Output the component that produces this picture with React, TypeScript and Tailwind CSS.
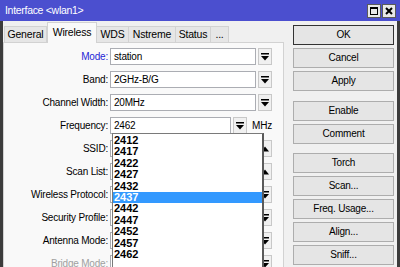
const tabs = [
  { label: "General", w: "w-[43px]" },
  { label: "Wireless", w: "w-[50px]", active: true },
  { label: "WDS", w: "w-[33px]" },
  { label: "Nstreme", w: "w-[48px]" },
  { label: "Status", w: "w-[36px]" },
  { label: "...", w: "w-[19px]" },
];

const freqs = ["2412", "2417", "2422", "2427", "2432", "2437", "2442", "2447", "2452", "2457", "2462"];

const buttonGroups = [
  [{ label: "OK", main: true }, { label: "Cancel" }, { label: "Apply" }],
  [{ label: "Enable" }, { label: "Comment" }],
  [{ label: "Torch" }, { label: "Scan..." }, { label: "Freq. Usage..." }, { label: "Align..." }, { label: "Sniff..." }],
];

function DownIcon() {
  return (
    <svg width="8" height="8" viewBox="0 0 8 8">
      <rect x="0" y="0" width="8" height="1.5" fill="#000" />
      <path d="M0 3 H8 L4 7.5 Z" fill="#000" />
    </svg>
  );
}

function UpIcon() {
  return (
    <svg width="8" height="6" viewBox="0 0 8 6">
      <path d="M0 5.5 H8 L4 0.5 Z" fill="#000" />
    </svg>
  );
}

function DropButton({ up }: { up?: boolean }) {
  return (
    <div className="w-[14px] h-[17px] flex items-center justify-center border border-[#c8c8c8] bg-[#f0f0f0]">
      {up ? <UpIcon /> : <DownIcon />}
    </div>
  );
}

function Field({ value, wide = true }: { value?: string; wide?: boolean }) {
  return (
    <div
      className={`${wide ? "w-[146px]" : "w-[121px]"} h-[17px] border border-[#abadb3] bg-white pl-[3px] flex items-center text-black`}
    >
      {value}
    </div>
  );
}

function Row({
  label,
  children,
  color = "text-black",
}: {
  label: string;
  children: React.ReactNode;
  color?: string;
}) {
  return (
    <div className="flex items-center h-[17px]">
      <div className={`w-[106px] text-right pr-[2px] ${color}`}>{label}</div>
      <div className="flex items-center gap-[2px]">{children}</div>
    </div>
  );
}

export default function App() {
  return (
    <div className="w-[400px] h-[267px] overflow-hidden bg-[#3c3c3c] flex flex-col font-['Liberation_Sans',Arial,sans-serif] text-[10px] tracking-[-0.2px] leading-none">
      <div className="h-[21px] shrink-0 bg-[#4b4fcf] flex items-center pl-[5px] pr-[4px] text-white text-[10.5px] tracking-[-0.3px]">
        <span>Interface &lt;wlan1&gt;</span>
        <div className="ml-auto flex gap-[1px] mt-[1px]">
          <div className="w-[14px] h-[14px] bg-[#e8e8e8] border border-[#5a5a5a] flex items-center justify-center">
            <div className="w-[8px] h-[8px] border border-black border-t-2" />
          </div>
          <div className="w-[14px] h-[14px] bg-[#e8e8e8] border border-[#5a5a5a] flex items-center justify-center">
            <svg width="8" height="8" viewBox="0 0 8 8">
              <path d="M1 1 L7 7 M7 1 L1 7" stroke="#000" strokeWidth="2" />
            </svg>
          </div>
        </div>
      </div>

      <div className="flex-1 mx-[3px] mb-[4px] bg-[#f0f0f0] flex relative">
        <div className="w-[281px] flex flex-col">
          <div className="h-[21px] flex items-end pl-[1px] shrink-0">
            {tabs.map((t) => (
              <div
                key={t.label}
                className={`${t.w} flex items-center justify-center border border-[#d2d2d2] text-black text-[10.5px] ${
                  t.active
                    ? "h-[21px] bg-[#f9f9f9] border-b-0 relative z-10 mb-[-1px] pb-[2px]"
                    : "h-[16px] bg-[#e6e6e6] border-b-0 -ml-[1px] first:ml-0"
                }`}
              >
                {t.label}
              </div>
            ))}
          </div>
          <div className="flex-1 border border-[#d2d2d2] border-b-0 bg-[#f9f9f9] pt-[5px] flex flex-col gap-[6px]">
            <Row label="Mode:" color="text-[#1f1fd6]">
              <Field value="station" />
              <DropButton />
            </Row>
            <Row label="Band:">
              <Field value="2GHz-B/G" />
              <DropButton />
            </Row>
            <Row label="Channel Width:">
              <Field value="20MHz" />
              <DropButton />
            </Row>
            <Row label="Frequency:">
              <Field value="2462" wide={false} />
              <DropButton />
              <span className="ml-[3px] text-black">MHz</span>
            </Row>
            <Row label="SSID:">
              <Field />
              <DropButton up />
            </Row>
            <Row label="Scan List:">
              <Field />
              <DropButton up />
            </Row>
            <Row label="Wireless Protocol:">
              <Field />
              <DropButton />
            </Row>
            <Row label="Security Profile:">
              <Field />
              <DropButton />
            </Row>
            <Row label="Antenna Mode:">
              <Field />
              <DropButton />
            </Row>
            <Row label="Bridge Mode:" color="text-[#a0a0a0]">
              <Field />
              <DropButton />
            </Row>
          </div>
        </div>

        <div className="w-[101px] ml-[9px] pt-[4px] flex flex-col gap-[10px]">
          {buttonGroups.map((g, i) => (
            <div key={i} className={`flex flex-col gap-[3px] ${i === 2 ? "-mt-[1px]" : ""}`}>
              {g.map((b) => (
                <div
                  key={b.label}
                  className={`h-[20px] flex items-center justify-center bg-[#e5e5e5] border text-black ${
                    b.main ? "border-[#333333]" : "border-[#adadad]"
                  }`}
                >
                  {b.label}
                </div>
              ))}
            </div>
          ))}
        </div>

        <div className="absolute left-[109px] top-[112px] w-[152px] h-[140px] bg-white border border-[#7a7a7a] border-r-2 border-r-[#5a5a5a] z-20 pt-[1px]">
          {freqs.map((f) => (
            <div
              key={f}
              className={`h-[11.4px] leading-[11.4px] pl-[1px] font-bold text-[11px] tracking-normal overflow-hidden ${
                f === "2437" ? "bg-[#3399ff] text-white" : "text-black"
              }`}
            >
              {f}
            </div>
          ))}
        </div>
      </div>
    </div>
  );
}
